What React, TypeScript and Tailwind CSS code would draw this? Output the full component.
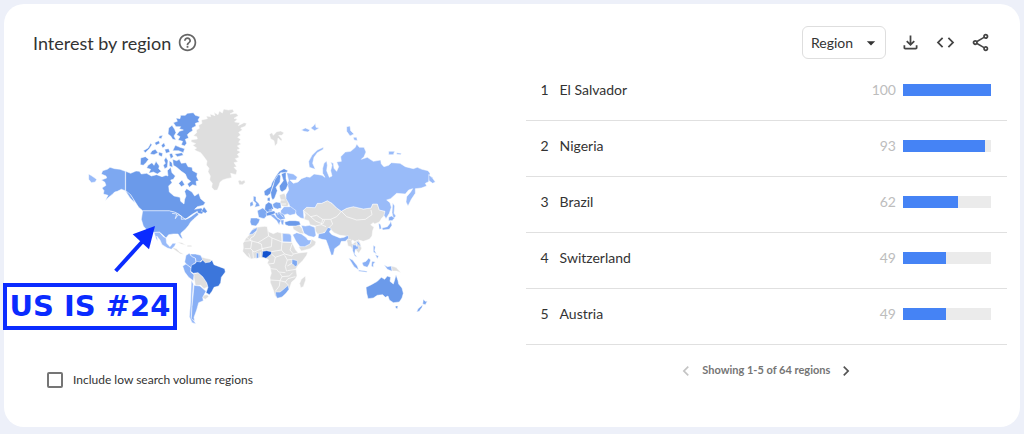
import {
    MdArrowDropDown,
    MdChevronLeft,
    MdChevronRight,
    MdCode,
    MdHelpOutline,
    MdOutlineFileDownload,
    MdOutlineShare,
} from 'react-icons/md'

const regions = [
    { name: 'El Salvador', score: 100 },
    { name: 'Nigeria', score: 93 },
    { name: 'Brazil', score: 62 },
    { name: 'Switzerland', score: 49 },
    { name: 'Austria', score: 49 },
]

// Countries grouped by fill, drawn in order
const shapes = [
    {
        fill: '#dedede',
        paths: [
            // Greenland
            'M403 271L395 262 397 250 389 240 391 228 384 215 387 205 379 195 381 183 370 168 362 158 350 153 343 149 350 144 338 136 347 131 333 125 334 119 352 117 350 110 340 107 350 98 349 90 358 85 356 76 366 70 364 60 382 56 379 48 392 50 390 42 405 47 402 37 414 44 418 33 427 39 431 27 445 30 458 28 462 35 450 42 468 40 475 47 462 55 472 57 464 66 480 68 475 77 492 68 500 70 496 79 482 84 487 90 476 97 482 105 473 112 482 118 476 127 484 132 472 138 480 146 471 150 482 156 472 163 478 172 466 176 474 185 462 188 470 200 462 202 471 212 468 224 452 220 455 233 440 236 428 240 420 247 417 258 412 270Z',
            // Iceland and Svalbard
            'M474 243L480 240 485 244 493 240 496 247 488 254 478 254Z',
            'M568 103L576 98 580 106 590 95 602 93 612 98 606 106 596 106 606 118 604 124 594 114 592 130 585 139 582 122 572 116Z',
            // Belarus and the Baltics
            'M598 285L613 280 618 290 627 312 622 320 605 318 600 308 602 300Z',
            // Africa
            'M520 384L536 381 554 379 562 380 566 395 580 401 592 396 604 399 626 400 634 403 628 408 633 420 638 432 647 450 655 459 683 456 680 466 668 482 654 496 648 506 651 528 645 538 635 546 628 566 618 578 606 591 592 595 585 588 580 570 571 548 570 532 574 520 570 500 562 490 566 480 558 475 546 473 535 473 512 477 500 468 488 454 490 444 489 430 498 415 510 403Z',
            // Madagascar
            'M676 528L677 540 670 560 662 563 659 550 664 538Z',
            // Syria, Iraq, Oman, Yemen
            'M638 378L658 376 666 385 672 402 660 400 640 388Z',
            'M656 441L680 437 692 430 694 417 708 425 705 435 690 446 664 453Z',
            // Asia outside Russia
            'M670 331L680 322 705 323 712 310 725 310 742 302 756 310 770 324 784 334 800 325 820 320 850 327 873 324 878 312 892 312 898 330 915 334 914 345 905 355 898 366 884 372 880 368 872 374 882 382 878 392 876 408 868 418 850 424 836 420 825 425 818 420 812 430 802 420 798 408 780 406 762 398 748 384 740 393 725 402 712 402 705 390 706 378 690 374 686 362 672 358 676 345Z',
            // Myanmar to Vietnam
            'M800 420L812 418 818 432 828 424 836 420 842 432 845 446 836 460 828 450 816 446 812 440 804 438Z',
            // Papua New Guinea
            'M934 498L948 502 963 518 950 513 936 513Z',
            // Guianas, Bolivia, Paraguay, Uruguay
            'M362 470L374 474 392 478 394 484 382 490 368 488Z',
            'M340 522L354 518 368 530 380 548 384 560 372 566 362 556 346 556Z',
            'M370 586L382 584 386 590 376 598 368 594Z',
            // Central America and the Caribbean
            'M276 442L290 446 298 455 312 463 302 462 284 450Z',
            'M292 426L306 428 318 436 303 432Z',
            'M322 436L334 436 336 440 322 440Z',
        ],
    },
    {
        fill: '#99bbf9',
        paths: [
            // Russia
            'M620 218L640 222 652 231 648 240 630 240 640 250 654 246 664 236 680 230 690 232 702 222 716 224 726 226 735 232 728 220 728 205 732 190 740 183 742 196 740 212 748 232 756 228 752 212 756 196 752 186 760 190 762 205 770 214 776 200 770 186 784 184 782 170 796 156 812 154 826 142 830 132 838 142 852 142 858 156 852 170 844 178 862 172 880 184 902 180 904 192 912 200 926 196 934 188 960 190 976 200 1000 206 1012 202 1026 208 1044 212 1050 220 1046 245 1036 250 1040 258 1024 264 1006 266 1006 280 994 298 984 318 978 306 980 290 992 276 998 266 986 270 976 282 950 280 932 296 920 300 930 308 934 322 928 340 918 356 912 346 915 334 898 330 892 312 878 312 873 324 850 327 820 320 800 325 784 334 770 324 756 310 742 302 725 310 712 310 705 323 680 322 670 331 672 356 662 354 650 345 644 332 630 322 627 312 618 296 618 284 626 270 622 250 626 242Z',
            'M1046 224L1056 232 1066 246 1058 250 1047 242Z',
            // Novaya Zemlya and the Arctic islands
            'M688 202L686 184 696 166 712 150 730 142 730 148 712 158 702 172 698 190 706 208Z',
            'M800 80L810 78 812 92 822 102 810 108 800 94Z',
            'M820 112L830 112 832 122 822 120Z',
            'M926 154L944 154 940 164 926 164Z',
            'M950 158L964 160 962 164 950 163Z',
            'M664 90L676 84 690 90 684 96 672 94Z',
            'M692 84L700 78 706 70 708 82 718 84 704 92Z',
            'M26 222L36 228 50 238 46 246 34 248 26 238Z',
            // Sakhalin
            'M938 308L944 318 942 340 948 348 940 356 936 338Z',
            // Ukraine and Kazakhstan border
            'M602 332L612 320 632 320 648 332 646 342 630 346 622 342 610 346 602 342Z',
            // Iran, Saudi Arabia, Egypt
            'M664 376L676 378 688 376 704 382 708 406 702 412 686 408 672 400Z',
            'M638 404L650 398 664 402 678 412 684 420 694 420 690 432 674 440 660 440 648 424Z',
            'M608 400L630 402 634 408 634 426 608 426Z',
            // Mexico
            'M222 397L238 396 250 410 258 414 260 430 270 440 278 430 288 430 284 438 274 448 262 444 246 434 240 420 230 408 234 424 228 416Z',
            // Chile
            'M334 540L340 552 338 580 336 620 334 650 348 672 336 668 328 650 332 600Z',
        ],
    },
    {
        fill: '#88aff5',
        paths: [
            // Colombia, Venezuela, Peru and Ecuador
            'M318 466L328 460 334 468 346 474 348 486 338 494 334 504 320 494 314 486Z',
            'M330 462L346 462 362 466 368 478 358 488 350 490 346 474 336 470Z',
            'M308 498L318 492 334 504 332 516 342 524 340 542 326 532 314 516Z',
            // Argentina
            'M342 556L360 558 378 574 368 592 370 602 356 608 350 630 342 652 344 664 334 656 336 620 340 580Z',
            // India and Pakistan
            'M714 414L716 402 734 398 744 382 754 386 748 396 756 404 780 414 792 412 804 406 806 414 796 424 784 424 780 434 764 446 760 464 754 466 744 436 738 420 726 418Z',
            // Japan and Korea
            'M926 352L934 348 944 354 936 362 926 362Z',
            'M932 362L936 376 928 388 908 390 906 384 922 380 930 370Z',
            'M896 370L902 374 904 386 898 388Z',
            // Thailand, Malaysia, Indonesia, Philippines
            'M818 434L832 436 836 446 826 448 824 462 832 472 824 468 818 452Z',
            'M828 422L838 428 842 440 834 434Z',
            'M806 474L818 480 832 498 836 510 822 500Z',
            'M836 510L862 514 860 517 836 514Z',
            'M846 488L858 484 866 474 872 480 868 492 862 502 850 498Z',
            'M876 484L886 486 880 492 880 502 874 498Z',
            'M880 436L886 440 884 452 890 462 880 456Z',
            'M886 464L896 468 892 476Z',
            'M912 494L922 500 934 498 936 514 922 508Z',
            // Southern Europe and Morocco
            'M506 404L516 390 532 382 530 392 518 402Z',
            'M568 344L578 340 584 346 594 356 606 362 600 366 598 376 590 362 578 352Z',
            'M584 338L598 336 612 344 616 356 602 360 590 352Z',
            'M602 360L612 360 610 376 604 372Z',
        ],
    },
    {
        fill: '#7da8f1',
        paths: [
            // Alaska
            'M136 214L136 272 124 268 112 274 104 276 96 284 86 292 76 302 84 286 70 282 72 272 66 264 78 256 74 246 64 240 80 234 78 228 64 222 68 212 82 208 90 202 104 206 120 208Z',
            'M136 272L148 278 160 296 164 308 150 294Z',
            // Lower US
            'M188 332L268 332 284 336 296 342 306 350 316 358 330 352 344 342 352 336 356 344 342 356 332 366 326 376 316 388 304 398 302 402 308 416 302 414 294 402 280 402 266 404 258 414 248 404 238 396 222 397 202 392 190 378 184 358Z',
            // UK, Ireland, France, Spain
            'M520 288L528 290 528 302 536 310 540 318 524 322 528 310 520 302Z',
            'M510 308L518 304 520 316 510 320Z',
            'M532 332L548 324 560 332 562 346 552 356 536 352Z',
            'M512 354L530 354 540 358 536 368 528 378 514 376 510 366Z',
            // Poland and its neighbours
            'M578 312L588 306 602 308 604 324 592 328 580 322Z',
            // Kenya, Ghana, South Africa
            'M636 478L652 482 652 496 646 500 636 490Z',
            'M529 458L536 460 536 474 529 475Z',
            'M586 576L600 576 608 570 624 556 627 568 618 580 606 591 592 595 588 588Z',
            // New Zealand
            'M1030 598L1036 604 1042 604 1036 614 1028 612Z',
            'M1028 614L1026 622 1018 634 1010 636 1014 626Z',
        ],
    },
    {
        fill: '#6b9aea',
        paths: [
            // Canada mainland
            'M137 214L152 220 168 213 178 214 184 222 200 220 214 228 230 224 246 230 258 226 264 228 262 212 272 202 276 218 286 228 280 238 272 240 276 248 266 258 268 276 282 288 300 292 302 304 312 312 314 298 318 288 314 274 320 266 336 276 344 288 356 280 362 296 376 308 370 316 352 320 344 328 364 324 372 334 366 342 354 340 352 334 338 342 316 358 306 350 296 342 284 336 268 332 188 332 176 322 162 300 152 284 137 272Z',
            'M364 334L372 320 382 334 376 340Z',
            // Ellesmere and Axel Heiberg
            'M280 68L292 64 288 54 300 56 302 46 316 46 322 40 340 38 346 46 360 50 354 60 358 66 346 70 348 78 336 84 338 92 328 98 322 104 326 114 316 118 320 130 314 138 304 134 308 124 294 120 300 110 290 104 298 94 310 90 298 86 302 80 288 80Z',
            'M266 84L276 76 284 88 288 98 282 108 288 120 278 118 272 108 264 102Z',
            'M286 136L300 142 314 146 310 158 296 152 278 152Z',
            // Baffin
            'M278 178L290 182 298 178 304 190 318 188 324 200 336 202 338 212 352 220 350 230 356 242 348 244 350 258 338 254 328 262 322 252 332 244 322 236 316 222 304 214 290 202 280 196Z',
            'M296 250L306 240 314 254 304 260Z',
            // Victoria, Banks and the smaller islands
            'M182 174L196 170 206 178 198 188 190 196 181 194Z',
            'M204 196L216 188 222 196 228 184 238 198 236 206 244 214 232 222 220 216 206 220 212 208 200 204Z',
            'M190 152L204 144 212 130 216 134 208 146 196 158Z',
            'M216 152L226 148 234 158 222 164 210 162Z',
            'M224 128L236 122 240 130 228 136Z',
            'M238 108L248 106 244 116 236 114Z',
            'M244 136L252 128 256 138 248 144Z',
            'M252 180L258 172 264 182 262 202 254 206 250 196 256 190Z',
            'M268 162L276 160 280 170 272 176Z',
            'M268 182L276 188 278 202 268 198Z',
            'M236 156L248 160 246 170 236 166Z',
            'M254 148L266 146 270 156 258 160Z',
            'M284 162L306 158 310 166 292 170Z',
            // Norway, Sweden, Finland
            'M554 286L552 274 562 266 572 260 576 248 588 228 598 214 612 206 624 212 618 218 602 218 592 230 584 244 578 258 572 280 562 288Z',
            'M574 292L572 278 580 256 584 240 596 222 602 228 600 246 588 262 592 272 584 294 578 300Z',
            'M600 270L598 258 610 242 604 222 618 216 618 236 624 254 618 268 606 276Z',
            // Germany, Switzerland, Austria
            'M556 314L566 306 576 312 580 326 574 336 562 336 554 328Z',
            'M558 340L566 336 584 332 586 340 572 346 560 348Z',
            // Denmark
            'M562 294L570 292 570 304 562 302Z',
            // Turkey
            'M614 366L628 362 646 362 658 364 662 374 648 378 626 378 616 374Z',
            // Australia
            'M858 562L874 554 892 544 904 532 914 538 922 528 932 532 930 544 940 552 944 540 948 524 954 542 956 552 966 564 970 580 966 594 958 606 940 608 928 600 924 588 916 592 908 584 892 586 880 594 864 596 860 580Z',
            'M946 618L954 618 952 626 947 624Z',
        ],
    },
    {
        fill: '#3c76db',
        paths: [
            'M334 496L346 490 350 484 362 486 368 480 376 488 390 486 396 480 402 494 418 500 434 506 436 516 424 532 422 548 416 558 402 562 396 574 388 584 378 578 384 562 380 548 368 530 354 518 340 520 332 514Z',
        ],
    },
    {
        fill: '#1352ce',
        paths: ['M548 454L560 452 574 455 574 462 564 470 558 475 546 471Z'],
    },
]

const borders = [
    // Africa
    'M490 424L512 422 512 414 522 408 530 392 M512 422L534 428 544 432 548 454 M500 412L512 422 M534 428L566 408 562 380 M566 408L576 414 606 426 604 399 M606 426L604 450 574 455 M576 414L574 440 546 446 M494 446L512 446 522 456 546 446 M506 460L512 477 M518 452L520 474 M541 456L541 473 M512 446L516 422 M606 426L638 428 M636 432L630 450 640 462 655 459 M604 450L614 462 636 468 640 462 M574 462L586 472 614 462 M586 472L582 490 564 492 M614 466L622 480 636 478 M622 480L616 500 620 514 M572 506L590 508 596 516 616 518 M570 540L600 542 606 530 600 520 M648 508L622 512 M606 530L628 528 638 518 M600 542L598 558 586 574 M600 542L616 546 624 536 646 530 M616 546L626 556 M636 490L622 498',
    // Asia
    'M784 334L800 350 830 360 856 358 876 344 873 330 M784 334L770 350 752 358 758 372 746 384 M670 331L692 350 710 346 728 358 752 358 M692 350L708 364 728 372 734 360 M706 378L724 374 738 380 M724 374L728 358 M818 420L816 432 M828 424L830 440',
    // Europe
    'M566 330L584 330 600 326 M590 326L594 344 M600 300L614 300 M602 312L618 312 M598 338L610 352 M574 326L590 338',
    // Great Lakes
    'M276 340L290 342 286 356 294 344 304 348 304 358 322 356 336 346',
]

function WorldMap() {
    return (
        <svg viewBox="0 0 1080 690" className="block w-full" role="img" aria-label="Interest by region map">
            {shapes.map((group) => (
                <g key={group.fill} fill={group.fill} stroke="#fff" strokeWidth="1.5" strokeLinejoin="round">
                    {group.paths.map((d) => (
                        <path key={d} d={d} />
                    ))}
                </g>
            ))}
            {borders.map((d) => (
                <path key={d} d={d} fill="none" stroke="#fff" strokeWidth="2" />
            ))}
            <path d="M107 513L186 426" stroke="#0a2bff" strokeWidth="12" />
            <path d="M225 378L158 403L207 448Z" fill="#0a2bff" />
        </svg>
    )
}

function RegionTable() {
    return (
        <table className="w-full border-collapse text-sm text-[#333]">
            <tbody>
                {regions.map((region, i) => (
                    <tr key={region.name} className="h-14 border-b border-[#e0e0e0]">
                        <td className="w-[34px] p-0 pb-1 pl-[15px]">{i + 1}</td>
                        <td className="p-0 pb-1">{region.name}</td>
                        <td className="w-12 p-0 pr-[7px] pb-1 text-right text-[#bdbdbd]">{region.score}</td>
                        <td className="w-[104px] p-0 pr-4 pb-1">
                            <div className="h-3 bg-[#ebebeb]">
                                <div className="h-full bg-[#4583f5]" style={{ width: `${region.score}%` }} />
                            </div>
                        </td>
                    </tr>
                ))}
            </tbody>
        </table>
    )
}

export default function App() {
    return (
        <div className="min-h-screen bg-[#edf0f9] p-1 pb-1.5 font-['Lato',sans-serif]">
            <main className="rounded-[20px] bg-white pt-[22px] pr-[13px] pb-[39px]">
                <header className="flex h-[33px] items-center pr-4 pl-[29px] text-[#333]">
                    <h2 className="text-lg">Interest by region</h2>
                    <button aria-label="Help" className="ml-1.5 text-[#666]">
                        <MdHelpOutline size={21} />
                    </button>
                    <button className="ml-auto flex h-[33px] w-[84px] items-center justify-between rounded-md border border-[#dedede] pr-1 pl-2 text-sm">
                        Region
                        <MdArrowDropDown size={20} />
                    </button>
                    <div className="ml-[14px] flex items-center gap-[14px] text-[#444]">
                        <button aria-label="Download">
                            <MdOutlineFileDownload size={21} />
                        </button>
                        <button aria-label="Embed">
                            <MdCode size={21} />
                        </button>
                        <button aria-label="Share">
                            <MdOutlineShare size={21} />
                        </button>
                    </div>
                </header>

                <div className="mt-[5px] grid grid-cols-[13fr_12fr]">
                    <section className="pt-9">
                        <figure className="relative ml-[76px] max-w-[360px]">
                            <WorldMap />
                            <figcaption className="absolute bottom-0 -left-[77px] flex h-[47px] w-[174px] items-center justify-center border-4 border-[#0a2bff] bg-white font-['DejaVu_Sans',sans-serif] text-[29px] font-bold whitespace-nowrap text-[#0a2bff]">
                                US IS #24
                            </figcaption>
                        </figure>
                        <label className="mt-[42px] ml-[43px] flex items-center gap-2.5 text-xs text-[#333]">
                            <input
                                type="checkbox"
                                className="size-4 appearance-none rounded-xs border-2 border-[#757575] checked:bg-[#4583f5]"
                            />
                            Include low search volume regions
                        </label>
                    </section>

                    <section>
                        <RegionTable />
                        <nav className="mt-4 flex items-center justify-center gap-1.5 text-[11px] font-bold text-[#757575]">
                            <button aria-label="Previous" disabled className="text-[#c4c4c4]">
                                <MdChevronLeft size={20} />
                            </button>
                            Showing 1-5 of 64 regions
                            <button aria-label="Next" className="text-[#555]">
                                <MdChevronRight size={20} />
                            </button>
                        </nav>
                    </section>
                </div>
            </main>
        </div>
    )
}
